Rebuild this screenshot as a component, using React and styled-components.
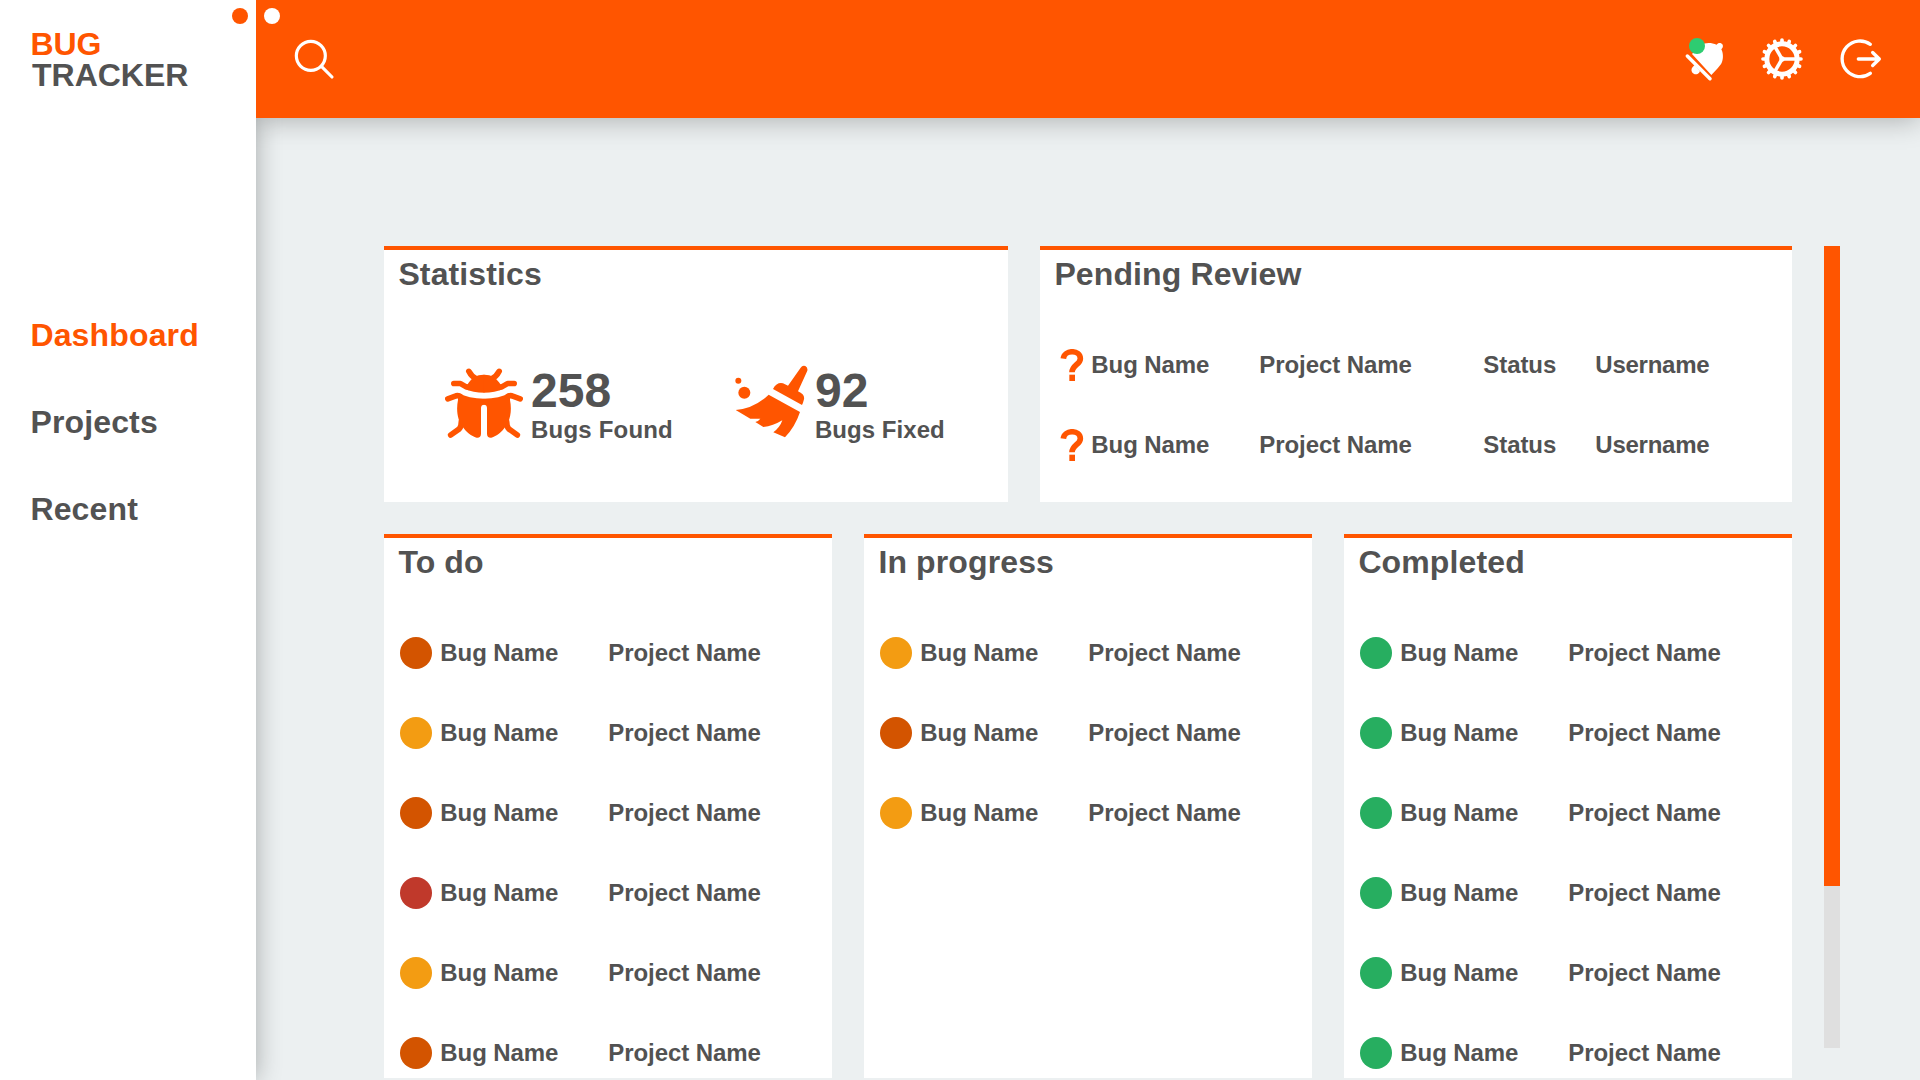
import React from "react";
import styled, { createGlobalStyle } from "styled-components";

const color = {
  accent: "#ff5500",
  text: "#525252",
  page: "#ecf0f1",
  track: "#dfdfdf",
  high: "#d35400",
  medium: "#f39c12",
  critical: "#c0392b",
  done: "#27ae60",
  notify: "#2ecc71",
};

const GlobalStyle = createGlobalStyle`
  * { box-sizing: border-box; }
  body {
    margin: 0;
    overflow: hidden;
    background: ${color.page};
    color: ${color.text};
    font-family: "Liberation Sans", Arial, sans-serif;
    font-weight: 700;
  }
`;

const Page = styled.div`
  display: grid;
  grid-template-columns: 256px 1664px;
  grid-template-rows: 118px 962px;
  grid-template-areas: "side top" "side main";
  width: 1920px;
  height: 1080px;
  overflow: hidden;
`;

const Sidebar = styled.aside`
  grid-area: side;
  position: relative;
  z-index: 1;
  padding: 28px 0 0 30.4px;
  background: #fff;
  box-shadow: 0 0 24px rgba(0, 0, 0, 0.3);
`;

const Brand = styled.h1`
  display: flex;
  flex-direction: column;
  height: 63px;
  margin: 0;
  font-size: 32px;
  line-height: 32px;
`;

const BrandTop = styled.span`
  color: ${color.accent};
`;

const BrandBottom = styled.span`
  margin-top: -1px;
  padding-left: 1.6px;
`;

const Nav = styled.nav`
  display: flex;
  flex-direction: column;
  gap: 51px;
  margin-top: 226px;
`;

const NavLink = styled.a`
  font-size: 32px;
  line-height: 36px;
  letter-spacing: 0.15px;
  color: ${(p) => (p.$active ? color.accent : color.text)};
`;

const PageDots = styled.div`
  position: absolute;
  z-index: 3;
  top: 8px;
  left: 232px;
  display: flex;
  gap: 16px;
`;

const PageDot = styled.span`
  width: 16px;
  height: 16px;
  border-radius: 50%;
  background: ${(p) => p.$fill};
`;

const TopBar = styled.header`
  grid-area: top;
  position: relative;
  z-index: 2;
  display: flex;
  justify-content: space-between;
  padding: 37px 38px 0 37px;
  background: ${color.accent};
  box-shadow: 0 2px 26px rgba(0, 0, 0, 0.28);
  clip-path: inset(0 0 -60px 0);
`;

const Actions = styled.div`
  display: flex;
  gap: 36px;
`;

const IconButton = styled.button`
  position: relative;
  display: flex;
  width: 42px;
  height: 44px;
  padding: 0;
  border: 0;
  background: none;

  svg {
    flex: none;
    overflow: visible;
  }
`;

const Badge = styled.span`
  position: absolute;
  top: 1px;
  left: 5px;
  width: 16px;
  height: 16px;
  border-radius: 50%;
  background: ${color.notify};
`;

const Main = styled.main`
  grid-area: main;
  display: flex;
  gap: 32px;
  padding: 128px 80px 0 128px;
`;

const Board = styled.div`
  display: flex;
  flex-direction: column;
  gap: 32px;
  width: 1408px;
`;

const CardRow = styled.div`
  display: grid;
  grid-template-columns: ${(p) => p.$columns};
  gap: 32px;
  height: ${(p) => p.$height}px;
`;

const Card = styled.section`
  border-top: 4px solid ${color.accent};
  background: #fff;
`;

const CardTitle = styled.h2`
  margin: 6px 0 0 14.4px;
  font-size: 32px;
  line-height: 36px;
  letter-spacing: 0.12px;
`;

const StatList = styled.div`
  display: flex;
  padding-top: 72px;
`;

const Stat = styled.div`
  display: flex;
  gap: ${(p) => p.$gap}px;
  padding-left: ${(p) => p.$inset}px;
  width: ${(p) => p.$width}px;

  svg {
    flex: none;
    margin-top: ${(p) => p.$drop}px;
  }
`;

const StatText = styled.div`
  display: flex;
  flex-direction: column;
`;

const StatValue = styled.strong`
  font-size: 48px;
  line-height: 53px;
`;

const StatLabel = styled.span`
  font-size: 24px;
  line-height: 25px;
  letter-spacing: ${(p) => p.$tracking}px;
  white-space: nowrap;
`;

const List = styled.div`
  display: flex;
  flex-direction: column;
  gap: 48px;
  padding: 57px 0 0 ${(p) => p.$inset}px;
`;

const Item = styled.div`
  display: grid;
  grid-template-columns: ${(p) => p.$columns};
  align-items: start;
  height: 32px;
`;

const Cell = styled.span`
  font-size: 24px;
  line-height: 31px;
  letter-spacing: ${(p) => p.$tracking || -0.08}px;
  white-space: nowrap;
`;

const Dot = styled.span`
  width: 32px;
  height: 32px;
  border-radius: 50%;
  background: ${(p) => color[p.$level]};
`;

const ScrollTrack = styled.div`
  width: 16px;
  height: 802px;
  background: ${color.track};
`;

const ScrollThumb = styled.div`
  height: 640px;
  background: ${color.accent};
`;

const SearchIcon = () => (
  <svg width="42" height="44" viewBox="879 111 126 132" fill="none" stroke="#fff" strokeWidth="9.5" strokeLinecap="round">
    <circle cx="932.5" cy="167.5" r="43.5" />
    <path d="M965 200L996 231" />
  </svg>
);

const BellOffIcon = () => (
  <svg width="42" height="44" viewBox="72 51 126 132" fill="#fff">
    <path d="M96 102L122 75C135 68 153 67 170 74C174 67 184 67 188 74C190 79 188 84 184 88C190 99 190 116 186 126C183 134 177 140 171 147L154 165Z" />
    <path d="M98 141A13 13 0 1 0 120 153L104 135Z" />
    <path d="M82 108L150 176" fill="none" stroke="#fff" strokeWidth="10.5" strokeLinecap="round" />
  </svg>
);

const TEETH = Array.from({ length: 16 }, (_, i) => i * 22.5);

const GearIcon = () => (
  <svg width="42" height="44" viewBox="306 51 126 132" fill="none" stroke="#fff">
    <circle cx="366" cy="117" r="45.5" strokeWidth="15" />
    {TEETH.map((a) => (
      <path key={a} d="M366 70V60" strokeWidth="11" strokeLinecap="round" transform={`rotate(${a} 366 117)`} />
    ))}
    {[0, 120, 240].map((a) => (
      <path key={a} d="M366 117H408" strokeWidth="10.5" transform={`rotate(${a} 366 117)`} />
    ))}
    <circle cx="366" cy="117" r="8" fill="#fff" stroke="none" />
  </svg>
);

const LogOutIcon = () => (
  <svg width="42" height="44" viewBox="540 51 126 132" fill="none" stroke="#fff" strokeWidth="10" strokeLinecap="round" strokeLinejoin="round">
    <path d="M631 73A53.5 53.5 0 1 0 631 160" />
    <path d="M595 117H658M638 97.500L658 117L638 136.500" />
  </svg>
);

const BugIcon = () => (
  <svg width="78" height="70" viewBox="225 415 234 210" fill={color.accent}>
    {["", "matrix(-1 0 0 1 684 0)"].map((t) => (
      <g key={t} transform={t}>
        <g fill="none" stroke={color.accent} strokeWidth="17" strokeLinecap="round" strokeLinejoin="round">
          <path d="M296.500 425Q305 442 322 450" />
          <path d="M251.500 461.500H271Q285 471 296 473" />
          <path d="M233.500 507.500L258 498.500Q267 497 272 501" />
          <path d="M242 616L268 597.500Q274 590 274 576" />
        </g>
        <path d="M343 435C322 434 305 445 297 458L283 478Q309 489 343 489Z" />
        <path d="M264 490Q296 507 343 507V525Q333 525 333 535V612C333 621 328 625 320 624C304 620 289 608 279 593C262 573 258 540 264 511Z" />
      </g>
    ))}
  </svg>
);

const BroomIcon = () => (
  <svg width="73" height="73" viewBox="104 76 219 219" fill={color.accent}>
    <circle cx="114" cy="123" r="9" />
    <circle cx="132" cy="159" r="18" />
    <path d="M218 148C227 130 242 126 254 134Q259 137 263 138L301 84Q306 76 315 79Q323 84 321 93L293 155Q314 164 311 179Q308 191 305 196Z" />
    <path d="M205 165L299 217Q284 262 254 293L219 278Q239 263 246 242Q218 259 189 262L165 247Q175 244 180 237L150 237L106 211Q162 206 205 165Z" />
  </svg>
);

const QuestionIcon = () => (
  <svg width="24" height="32" viewBox="119 357 72 96">
    <path d="M129 386C132 358 180 359 180 386C180 403 155 406 155 427" fill="none" stroke={color.accent} strokeWidth="17" />
    <path d="M147 434H164V453H147Z" fill={color.accent} />
  </svg>
);

const columns = [
  { title: "To do", levels: ["high", "medium", "high", "critical", "medium", "high"] },
  { title: "In progress", levels: ["medium", "high", "medium"] },
  { title: "Completed", levels: ["done", "done", "done", "done", "done", "done"] },
];

export default function App() {
  return (
    <>
      <GlobalStyle />
      <Page>
        <Sidebar>
          <Brand>
            <BrandTop>BUG</BrandTop>
            <BrandBottom>TRACKER</BrandBottom>
          </Brand>
          <Nav>
            <NavLink $active>Dashboard</NavLink>
            <NavLink>Projects</NavLink>
            <NavLink>Recent</NavLink>
          </Nav>
        </Sidebar>
        <PageDots>
          <PageDot $fill={color.accent} />
          <PageDot $fill="#fff" />
        </PageDots>
        <TopBar>
          <IconButton aria-label="Search">
            <SearchIcon />
          </IconButton>
          <Actions>
            <IconButton aria-label="Notifications">
              <BellOffIcon />
              <Badge />
            </IconButton>
            <IconButton aria-label="Settings">
              <GearIcon />
            </IconButton>
            <IconButton aria-label="Log out">
              <LogOutIcon />
            </IconButton>
          </Actions>
        </TopBar>
        <Main>
          <Board>
            <CardRow $columns="624px 752px" $height={256}>
              <Card>
                <CardTitle>Statistics</CardTitle>
                <StatList>
                  <Stat $inset={61} $width={351} $gap={8} $drop={4}>
                    <BugIcon />
                    <StatText>
                      <StatValue>258</StatValue>
                      <StatLabel $tracking={0.2}>Bugs Found</StatLabel>
                    </StatText>
                  </Stat>
                  <Stat $inset={0} $width={240} $gap={7} $drop={1}>
                    <BroomIcon />
                    <StatText>
                      <StatValue>92</StatValue>
                      <StatLabel $tracking={0.04}>Bugs Fixed</StatLabel>
                    </StatText>
                  </Stat>
                </StatList>
              </Card>
              <Card>
                <CardTitle>Pending Review</CardTitle>
                <List $inset={20}>
                  {[0, 1].map((i) => (
                    <Item key={i} $columns="31.3px 168px 224px 112px 1fr">
                      <QuestionIcon />
                      <Cell>Bug Name</Cell>
                      <Cell>Project Name</Cell>
                      <Cell>Status</Cell>
                      <Cell $tracking={-0.25}>Username</Cell>
                    </Item>
                  ))}
                </List>
              </Card>
            </CardRow>
            <CardRow $columns="repeat(3, 448px)" $height={544}>
              {columns.map((c) => (
                <Card key={c.title}>
                  <CardTitle>{c.title}</CardTitle>
                  <List $inset={16}>
                    {c.levels.map((level, i) => (
                      <Item key={i} $columns="40.3px 168px 1fr">
                        <Dot $level={level} />
                        <Cell>Bug Name</Cell>
                        <Cell>Project Name</Cell>
                      </Item>
                    ))}
                  </List>
                </Card>
              ))}
            </CardRow>
          </Board>
          <ScrollTrack>
            <ScrollThumb />
          </ScrollTrack>
        </Main>
      </Page>
    </>
  );
}
